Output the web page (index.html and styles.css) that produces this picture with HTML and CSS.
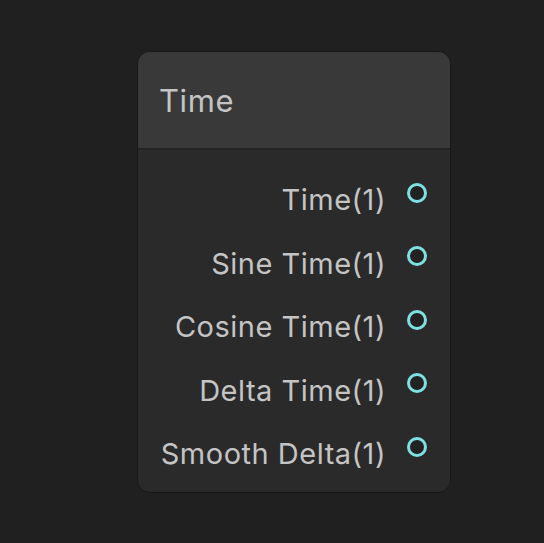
FILE: index.html
```html
<!DOCTYPE html>
<html>
<head>
<meta charset="utf-8">
<link rel="stylesheet" href="styles.css">
</head>
<body>
<div class="node">
  <div class="node-header"><span class="node-title">Time</span></div>
  <div class="node-body">
    <div class="port"><span class="port-label">Time(1)</span><span class="port-dot"></span></div>
    <div class="port"><span class="port-label">Sine Time(1)</span><span class="port-dot"></span></div>
    <div class="port"><span class="port-label">Cosine Time(1)</span><span class="port-dot"></span></div>
    <div class="port"><span class="port-label">Delta Time(1)</span><span class="port-dot"></span></div>
    <div class="port"><span class="port-label">Smooth Delta(1)</span><span class="port-dot"></span></div>
  </div>
</div>
</body>
</html>
```
FILE: styles.css
```css
html, body {
  margin: 0;
  padding: 0;
  background: #202020;
  width: 544px;
  height: 543px;
  overflow: hidden;
}
body {
  padding: 51px 0 0 137px;
  box-sizing: border-box;
  font-family: Inter, "Noto Sans", sans-serif;
}
.node {
  width: 314px;
  height: 442px;
  box-sizing: border-box;
  border: 1px solid #191919;
  border-radius: 13px;
  background: #2a2a2a;
  overflow: hidden;
  display: flex;
  flex-direction: column;
}
.node-header {
  height: 96px;
  background: #393939;
  border-bottom: 2px solid #232323;
  display: flex;
  align-items: center;
  padding-left: 21px;
  flex-shrink: 0;
}
.node-title {
  color: #c4c4c4;
  font-size: 31px;
  letter-spacing: 0.6px;
}
.node-body {
  padding-top: 18px;
  display: flex;
  flex-direction: column;
}
.port {
  height: 63.5px;
  display: flex;
  align-items: center;
  justify-content: flex-end;
  padding-right: 23px;
}
.port-label {
  color: #c4c4c4;
  font-size: 29px;
  letter-spacing: 0.5px;
}
.port-dot {
  width: 20px;
  height: 20px;
  box-sizing: border-box;
  border: 3px solid #7ee0e2;
  border-radius: 50%;
  margin-left: 21px;
  margin-bottom: 14px;
  background: #222;
}
```
